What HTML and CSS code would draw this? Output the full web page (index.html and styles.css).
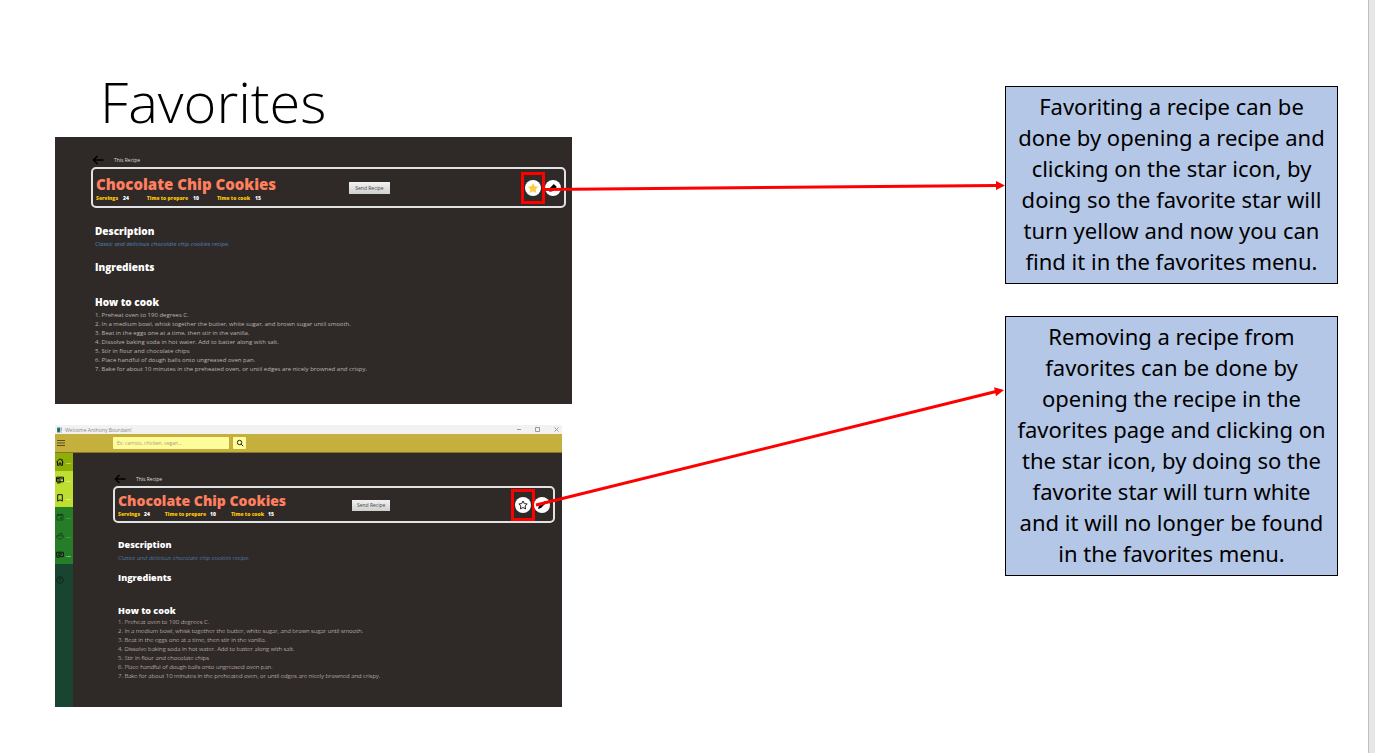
FILE: index.html
```
<!DOCTYPE html>
<html lang="en">
<head>
<meta charset="utf-8">
<title>Favorites</title>
<link rel="stylesheet" href="styles.css">
</head>
<body>
<main class="slide">
  <div class="shots">
    <h1 class="title">Favorites</h1>

    <section class="shot recipe">
      <div class="crumb">
        <svg class="back" viewBox="0 0 12 10"><path d="M11.500 5H1.500M5.500 1L1.500 5l4 4"/></svg>
        <span>This Recipe</span>
      </div>
      <header class="card">
        <div class="card-text">
          <h2 class="name">Chocolate Chip Cookies</h2>
          <dl class="stats">
            <div><dt>Servings</dt><dd>24</dd></div>
            <div><dt>Time to prepare</dt><dd>10</dd></div>
            <div><dt>Time to cook</dt><dd>15</dd></div>
          </dl>
        </div>
        <button class="send" type="button">Send Recipe</button>
        <div class="actions">
          <button class="round marked" type="button" aria-label="Remove from favorites"><svg viewBox="0 0 16 16"><path class="star-on" d="M8 3l1.600 3.300 3.600.5-2.600 2.500.6 3.600L8 11.200l-3.200 1.700.6-3.600-2.600-2.500 3.600-.5z"/></svg></button>
          <button class="round" type="button" aria-label="Edit recipe"><svg viewBox="0 0 16 16"><path d="M8.800 4L11.800 7 7.500 11.300 4.300 11.700 4.800 8z"/></svg></button>
        </div>
      </header>
      <div class="body">
        <h3>Description</h3>
        <p class="about">Classic and delicious chocolate chip cookies recipe.</p>
        <h3 class="ingredients">Ingredients</h3>
        <h3 class="how">How to cook</h3>
        <div class="steps">
          <p>1. Preheat oven to 190 degrees C.</p>
          <p>2. In a medium bowl, whisk together the butter, white sugar, and brown sugar until smooth.</p>
          <p>3. Beat in the eggs one at a time, then stir in the vanilla.</p>
          <p>4. Dissolve baking soda in hot water. Add to batter along with salt.</p>
          <p>5. Stir in flour and chocolate chips</p>
          <p>6. Place handful of dough balls onto ungreased oven pan.</p>
          <p>7. Bake for about 10 minutes in the preheated oven, or until edges are nicely browned and crispy.</p>
        </div>
      </div>
    </section>

    <section class="shot window">
      <div class="titlebar">
        <svg class="app-icon" viewBox="0 0 6 6"><path fill="#2f8f83" d="M0 0h4v6H0z"/><path fill="#24566b" d="M1 1h2v4H1z"/><path fill="#999" d="M5 0h1v4H5zM5 5h1v1H5z"/></svg>
        <span class="welcome">Welcome Anthony Bourdain!</span>
        <svg class="controls" viewBox="0 0 44 8"><path d="M1 3.500h4M19.500 1.500h4v4h-4zM38.500 1.500l4 4M42.500 1.500l-4 4"/></svg>
      </div>
      <div class="toolbar">
        <button class="burger" type="button" aria-label="Menu"><svg viewBox="0 0 8 6"><path d="M0 .5h8M0 3h8M0 5.500h8"/></svg></button>
        <input class="search" type="search" aria-label="Search recipes" placeholder="Ex: carrots, chicken, vegan...">
        <button class="find" type="button" aria-label="Search"><svg viewBox="0 0 8 8"><circle cx="3.500" cy="3.500" r="2.200"/><path d="M5.200 5.200l2 2"/></svg></button>
      </div>
      <div class="work">
        <nav class="side">
          <div class="group home">
            <a href="#home" aria-label="Home"><svg viewBox="0 0 8 8"><path d="M.5 4L4 .8 7.500 4M1.500 3.300v4h1.700V5h1.600v2.300h1.700v-4M6 1v1.500"/></svg><span>...</span></a>
          </div>
          <div class="group lime">
            <a href="#recipes" aria-label="Recipes"><svg viewBox="0 0 8 8"><path d="M.5 1.200h7v4.600h-7zM4 1v6.500M1 2.500h2.500M1 4h2.500M5 2.800h1.800M2 6v1.500L3.500 6"/></svg><span>...</span></a>
            <a href="#favorites" aria-label="Favorites"><svg viewBox="0 0 8 8"><path d="M1.700.7h4.600v6.500L4 5.800 1.700 7.200z"/></svg><span>...</span></a>
          </div>
          <div class="group green">
            <a class="dim" href="#plan" aria-label="Meal plan"><svg viewBox="0 0 8 8"><path d="M1 1.500h6v5.500H1zM1 2.500h6M2.500.5v1M5.500.5v1M4.500 4.500h1v1h-1z"/></svg><span>...</span></a>
            <a class="dim" href="#pantry" aria-label="Pantry"><svg viewBox="0 0 8 8"><path d="M.7 3.800h6.600C7.300 6 6 7 4 7S.7 6 .7 3.800zM3 3.500V2l3-1v2.500"/></svg><span>...</span></a>
            <a href="#messages" aria-label="Messages"><svg viewBox="0 0 8 8"><path d="M.7 1.200h6.600v4.500H3L1.700 7V5.700h-1zM2 2.800h4M2 4.200h3"/></svg><span>...</span></a>
          </div>
          <div class="group help">
            <a class="dim" href="#help" aria-label="Help"><svg viewBox="0 0 8 8"><circle cx="4" cy="4" r="3.300"/><path d="M3 3.200C3 2 5 2 5 3.200 5 4 4 4 4 4.800M4 5.500v.6"/></svg></a>
          </div>
        </nav>
        <div class="recipe compact">
          <div class="crumb">
            <svg class="back" viewBox="0 0 12 10"><path d="M11.500 5H1.500M5.500 1L1.500 5l4 4"/></svg>
            <span>This Recipe</span>
          </div>
          <header class="card">
            <div class="card-text">
              <h2 class="name">Chocolate Chip Cookies</h2>
              <dl class="stats">
                <div><dt>Servings</dt><dd>24</dd></div>
                <div><dt>Time to prepare</dt><dd>10</dd></div>
                <div><dt>Time to cook</dt><dd>15</dd></div>
              </dl>
            </div>
            <button class="send" type="button">Send Recipe</button>
            <div class="actions">
              <button class="round marked" type="button" aria-label="Add to favorites"><svg viewBox="0 0 16 16"><path class="star-off" d="M8 4l1.300 2.600 2.900.4-2.100 2 .5 2.900L8 10.500l-2.600 1.400.5-2.900-2.100-2 2.900-.4z"/></svg></button>
              <button class="round" type="button" aria-label="Edit recipe"><svg viewBox="0 0 16 16"><path d="M11 4l1.500 1.500-5.500 5.500-3 1 .8-3z"/></svg></button>
            </div>
          </header>
          <div class="body">
            <h3>Description</h3>
            <p class="about">Classic and delicious chocolate chip cookies recipe.</p>
            <h3 class="ingredients">Ingredients</h3>
            <h3 class="how">How to cook</h3>
            <div class="steps">
              <p>1. Preheat oven to 190 degrees C.</p>
              <p>2. In a medium bowl, whisk together the butter, white sugar, and brown sugar until smooth.</p>
              <p>3. Beat in the eggs one at a time, then stir in the vanilla.</p>
              <p>4. Dissolve baking soda in hot water. Add to batter along with salt.</p>
              <p>5. Stir in flour and chocolate chips</p>
              <p>6. Place handful of dough balls onto ungreased oven pan.</p>
              <p>7. Bake for about 10 minutes in the preheated oven, or until edges are nicely browned and crispy.</p>
            </div>
          </div>
        </div>
      </div>
    </section>
  </div>

  <svg class="arrows" viewBox="0 0 433 753" preserveAspectRatio="none" aria-hidden="true">
    <path class="line" d="M-27 189.500L425 185.500M-36 505L424 391.500"/>
    <path class="head" d="M424 181l9 4.500-9 4.500zM422 387.300l10 2.700-8 6.200z"/>
  </svg>

  <div class="notes">
    <p class="note">Favoriting a recipe can be done by opening a recipe and clicking on the star icon, by doing so the favorite star will turn yellow and now you can find it in the favorites menu.</p>
    <p class="note">Removing a recipe from favorites can be done by opening the recipe in the favorites page and clicking on the star icon, by doing so the favorite star will turn white and it will no longer be found in the favorites menu.</p>
  </div>
</main>
<div class="edge"></div>
</body>
</html>
```
FILE: styles.css
```
* { box-sizing: border-box; }

body {
  margin: 0;
  min-height: 100vh;
  display: flex;
  background: #fff;
  color: #000;
  font-family: "Open Sans", "Noto Sans", sans-serif;
}

h1, h2, h3, p, dl, dt, dd { margin: 0; }

button, input {
  font: inherit;
  border: 0;
  padding: 0;
}

svg { display: block; fill: none; }

.edge {
  width: 7px;
  background: #e6e6e6;
  border-left: 1px solid #bfbfbf;
}

.slide {
  flex: 1;
  display: grid;
  grid-template-columns: 517fr 433fr 333fr;
  align-items: start;
  padding: 0 30px 0 55px;
}

.title {
  padding: 66px 0 1px 45px;
  font-size: 56px;
  line-height: 70px;
  font-weight: 300;
}

/* Recipe view */

.shot { background: #2f2a28; }

.recipe {
  padding: 18px 6px 30px 36px;
  color: #fff;
  font-size: 6px;
  font-weight: 400;
}

.crumb {
  display: flex;
  align-items: center;
  gap: 10px;
  padding-left: 1px;
  line-height: 10px;
}

.crumb span { font-size: 5px; color: #ddd; }

.back {
  width: 12px;
  height: 10px;
  stroke: #000;
  stroke-width: 1.5;
}

.card {
  display: grid;
  grid-template-columns: 256fr 42fr 173fr;
  align-items: center;
  margin-top: 2px;
  padding: 5px 3px 4px;
  border: 2px solid #e2e2e2;
  border-radius: 5px;
}

.name {
  color: #ff7f5f;
  font-size: 15px;
  line-height: 20px;
  font-weight: 800;
  white-space: nowrap;
}

.stats {
  display: flex;
  gap: 18px;
  font-size: 5px;
  line-height: 8px;
  font-weight: 800;
  white-space: nowrap;
}

.stats div { display: flex; gap: 5px; }
.stats dt { color: #ffc60a; }

.send {
  height: 12px;
  background: linear-gradient(#f2f2f2, #cfcfcf);
  color: #444;
  font-size: 5px;
  line-height: 12px;
  white-space: nowrap;
}

.actions {
  display: flex;
  justify-content: flex-end;
  gap: 4px;
}

.round {
  position: relative;
  width: 16px;
  height: 16px;
  border-radius: 50%;
  background: #fff;
}

.round svg { width: 16px; height: 16px; fill: #000; }

.marked::after {
  content: "";
  position: absolute;
  inset: -8px -4px;
  border: 3px solid #f00;
}

.round .star-on { fill: #ffc845; }
.round .star-off { fill: none; stroke: #222; }

.body { padding: 16px 0 0 4px; }

.body h3 {
  font-size: 10px;
  line-height: 14px;
  font-weight: 800;
}

.about {
  color: #4d84b8;
  line-height: 12px;
  font-style: italic;
}

.body .ingredients { margin-top: 10px; }
.body .how { margin-top: 21px; }

.steps {
  margin-top: 2px;
  color: #b9b4b2;
  line-height: 9px;
  white-space: nowrap;
}

/* App window */

.window {
  width: 98%;
  margin-top: 21px;
}

.titlebar {
  display: flex;
  align-items: center;
  gap: 3px;
  height: 9px;
  padding: 0 2px;
  background: #f2f2f2;
  color: #888;
  font-size: 5px;
  line-height: 8px;
}

.app-icon { width: 5px; height: 6px; }

.controls {
  width: 44px;
  height: 8px;
  margin-left: auto;
  stroke: #999;
  stroke-width: 1;
}

.toolbar {
  display: flex;
  align-items: center;
  height: 19px;
  padding-left: 2px;
  background: #c6b03d;
  border-bottom: 1px solid #857530;
}

.burger { width: 8px; height: 6px; background: none; }
.burger svg { width: 8px; height: 6px; stroke: #57501f; }

.search {
  width: 116px;
  height: 12px;
  margin-left: 48px;
  padding: 0 4px;
  border-radius: 1px;
  background: #fffd9b;
  font-size: 5px;
}

.search::placeholder { color: #a5a07c; }

.find {
  display: grid;
  place-items: center;
  width: 13px;
  height: 12px;
  margin-left: 4px;
  border-radius: 1px;
  background: #fffd9b;
}

.find svg { width: 8px; height: 8px; stroke: #222; }

.work { display: flex; }

.side {
  width: 18px;
  display: flex;
  flex-direction: column;
  background: #19442f;
}

.group { padding: 0 1px; }

.group a {
  display: flex;
  align-items: center;
  gap: 2px;
  height: 19px;
  color: #fff;
  font-size: 6px;
  line-height: 6px;
  font-weight: 600;
  text-decoration: none;
}

.group svg { width: 8px; height: 8px; stroke: #111; flex: none; }
.group .dim { opacity: .4; }
.group .dim svg { stroke: #000; }

.home { background: #8fae08; }
.lime { background: #bedf31; }
.green { background: #267d28; }
.home a, .lime a { height: 18px; }
.help { padding-top: 6px; }

.compact {
  flex: 1;
  min-width: 0;
  padding: 21px 7px 26px 40px;
  font-weight: 300;
}

.compact .card {
  grid-template-columns: 235fr 38fr 160fr;
  padding: 4px 3px 3px;
}

.compact .name { font-size: 14px; line-height: 18px; }
.compact .stats { gap: 15px; }
.compact .stats div { gap: 4px; }
.compact .actions { gap: 3px; }
.compact .body { padding: 15px 0 0 5px; }
.compact .send { height: 11px; line-height: 11px; font-weight: 400; }
.compact .crumb span { font-weight: 400; }
.compact .body h3 { font-size: 9px; }
.compact .about { color: #5c9bd6; }
.compact .ingredients { margin-top: 7px; }
.compact .body .how { margin-top: 19px; }
.compact .steps { margin-top: 0; color: #e2dedc; }

/* Callouts */

.arrows {
  position: relative;
  width: 100%;
  height: 753px;
  overflow: visible;
  pointer-events: none;
}

.line { stroke: #f00; stroke-width: 3; }
.head { fill: #f00; }

.notes {
  display: grid;
  gap: 32px;
  padding-top: 86px;
}

.note {
  padding: 4px 8px 6px;
  border: 1px solid #000;
  background: #b4c7e7;
  font-family: "Noto Sans", sans-serif;
  font-size: 22px;
  line-height: 31px;
  text-align: center;
}
```
